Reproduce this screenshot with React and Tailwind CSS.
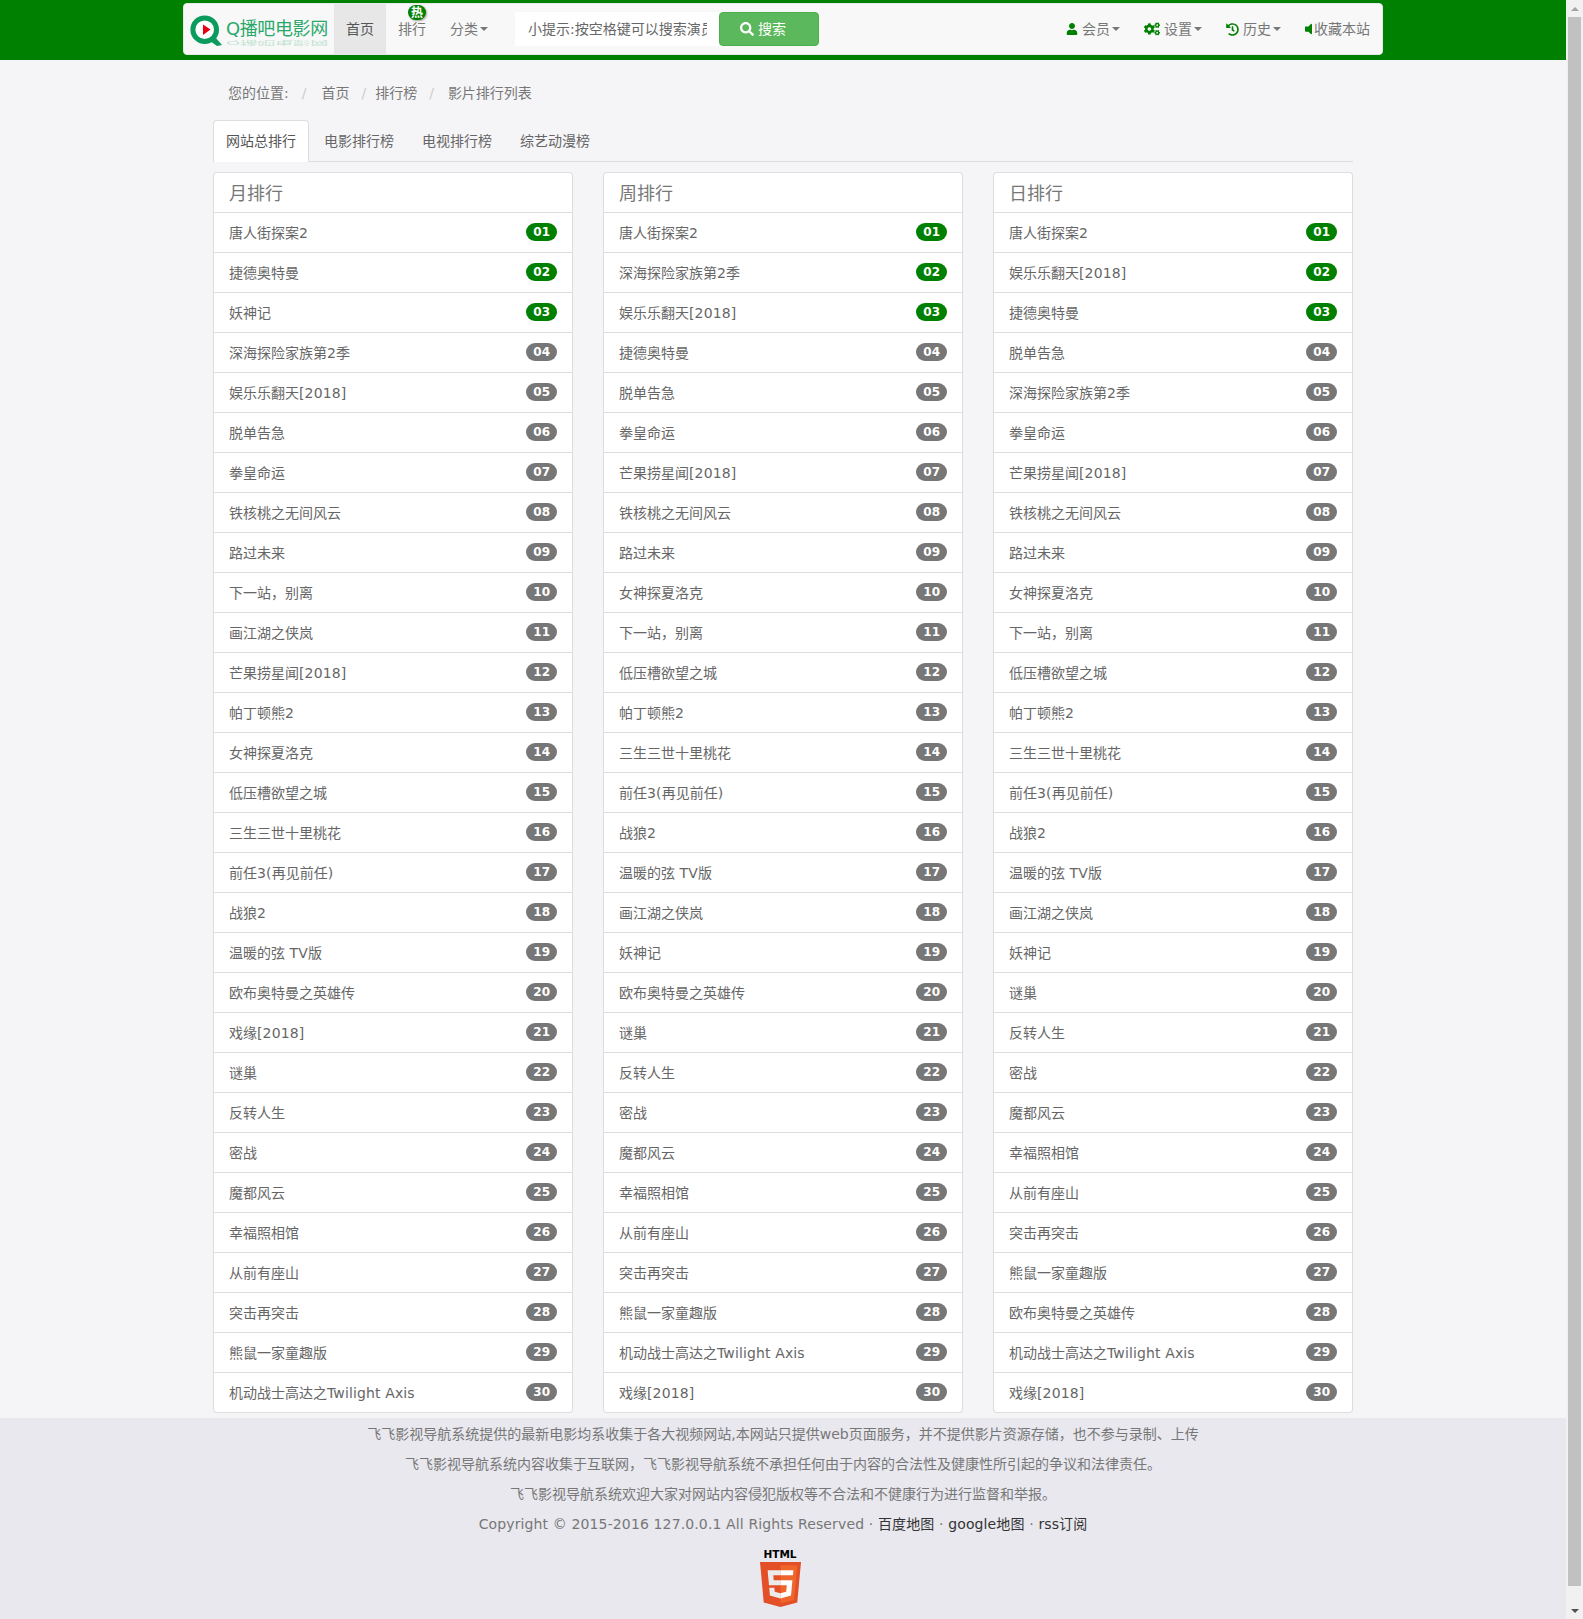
import React from "react";
import { FaUser, FaCogs, FaHistory, FaVolumeOff, FaSearch } from "react-icons/fa";

const month = ["唐人街探案2","捷德奥特曼","妖神记","深海探险家族第2季","娱乐乐翻天[2018]","脱单告急","拳皇命运","铁核桃之无间风云","路过未来","下一站，别离","画江湖之侠岚","芒果捞星闻[2018]","帕丁顿熊2","女神探夏洛克","低压槽欲望之城","三生三世十里桃花","前任3(再见前任)","战狼2","温暖的弦 TV版","欧布奥特曼之英雄传","戏缘[2018]","谜巢","反转人生","密战","魔都风云","幸福照相馆","从前有座山","突击再突击","熊鼠一家童趣版","机动战士高达之Twilight Axis"];
const week = ["唐人街探案2","深海探险家族第2季","娱乐乐翻天[2018]","捷德奥特曼","脱单告急","拳皇命运","芒果捞星闻[2018]","铁核桃之无间风云","路过未来","女神探夏洛克","下一站，别离","低压槽欲望之城","帕丁顿熊2","三生三世十里桃花","前任3(再见前任)","战狼2","温暖的弦 TV版","画江湖之侠岚","妖神记","欧布奥特曼之英雄传","谜巢","反转人生","密战","魔都风云","幸福照相馆","从前有座山","突击再突击","熊鼠一家童趣版","机动战士高达之Twilight Axis","戏缘[2018]"];
const day = ["唐人街探案2","娱乐乐翻天[2018]","捷德奥特曼","脱单告急","深海探险家族第2季","拳皇命运","芒果捞星闻[2018]","铁核桃之无间风云","路过未来","女神探夏洛克","下一站，别离","低压槽欲望之城","帕丁顿熊2","三生三世十里桃花","前任3(再见前任)","战狼2","温暖的弦 TV版","画江湖之侠岚","妖神记","谜巢","反转人生","密战","魔都风云","幸福照相馆","从前有座山","突击再突击","熊鼠一家童趣版","欧布奥特曼之英雄传","机动战士高达之Twilight Axis","戏缘[2018]"];

function Caret() {
  return <span className="ml-[2px] inline-block h-0 w-0 border-x-[4px] border-t-[4px] border-x-transparent border-t-[#777]" />;
}

function Logo() {
  return (
    <div className="flex h-[50px] w-[150px] shrink-0 items-start pl-[6px]">
      <svg width="33" height="32" viewBox="0 0 33 32" className="mt-[11px] shrink-0">
        <path d="M20 26 L27 31 L32 30 L25 22 Z" fill="#0b9c5d" />
        <circle cx="14.7" cy="14.7" r="11.8" fill="#fff" stroke="#0b9c5d" strokeWidth="5" />
        <path d="M13 9.5 L20.5 14.5 L13 20 Z" fill="#e60012" />
      </svg>
      <div className="ml-[3px] mt-[14px] text-[18px] leading-[22px] tracking-[-0.4px] whitespace-nowrap text-[#2aa86c]">
        Q播吧电影网
        <div aria-hidden="true" className="h-[6px] origin-top opacity-25 [transform:scaleY(-0.3)_translateY(-20px)]">Q播吧电影网</div>
      </div>
    </div>
  );
}

function NavRight({ icon, label, iconW, right = "pr-3", caret = true }) {
  return (
    <div className={`flex h-[50px] items-center pl-3 text-[#777] ${right}`}>
      <span className={`flex items-center text-[#008000] ${iconW}`}>{icon}</span>
      <span>{label}</span>
      {caret && <Caret />}
    </div>
  );
}

function Header() {
  return (
    <header className="h-[60px] bg-[#008000] pt-[3px]">
      <div className="mx-auto flex h-[52px] w-[1200px] items-stretch rounded border border-[#e7e7e7] bg-[#f8f8f8] text-[14px] leading-5">
        <Logo />
        <div className="flex h-[50px] w-[52px] items-center justify-center bg-[#e7e7e7] text-[#555]">首页</div>
        <div className="relative flex h-[50px] w-[52px] items-center justify-center text-[#777]">
          排行
          <span className="absolute left-[22px] top-[1px] flex h-[15px] w-[18px] items-center justify-center rounded-full bg-[#008000] text-[12px] font-bold leading-none text-white shadow-[1px_1px_2px_rgba(0,0,0,0.35)]">热</span>
        </div>
        <div className="flex h-[50px] items-center px-3 text-[#777]">分类<Caret /></div>
        <div className="ml-[15px] mt-[8px] flex h-[34px] w-[304px]">
          <input
            readOnly
            placeholder="小提示:按空格键可以搜索演员"
            className="w-[204px] bg-white pl-[13px] pr-[12px] text-[14px] outline-none placeholder:text-[#666]"
          />
          <div className="flex w-[100px] items-center rounded border border-[#4cae4c] bg-[#5cb85c] pl-[20px] text-white">
            <FaSearch size={14} />
            <span className="ml-[4px]">搜索</span>
          </div>
        </div>
        <div className="ml-auto flex">
          <NavRight icon={<FaUser size={12} />} label="会员" iconW="w-[16px]" />
          <NavRight icon={<FaCogs size={16} />} label="设置" iconW="w-[20px]" />
          <NavRight icon={<FaHistory size={13} />} label="历史" iconW="w-[17px]" right="pr-[10px]" />
          <NavRight icon={<FaVolumeOff size={14} />} label="收藏本站" iconW="w-[11px]" caret={false} />
        </div>
      </div>
    </header>
  );
}

function Breadcrumb() {
  const sep = "text-[#ccc]";
  return (
    <nav className="flex h-9 items-center pl-[15px] text-[14px] leading-5 text-[#777]">
      <span>您的位置:</span>
      <span className={`ml-[13px] ${sep}`}>/</span>
      <span className="ml-[15px]">首页</span>
      <span className={`ml-[12px] ${sep}`}>/</span>
      <span className="ml-[9px]">排行榜</span>
      <span className={`ml-[12px] ${sep}`}>/</span>
      <span className="ml-[14px]">影片排行列表</span>
    </nav>
  );
}

function Tabs() {
  const tabs = ["电影排行榜", "电视排行榜", "综艺动漫榜"];
  return (
    <div className="mt-[9px] flex h-[42px] gap-[2px] border-b border-[#ddd] text-[14px] leading-5 text-[#666]">
      <div className="h-[42px] rounded-t border border-b-0 border-[#ddd] bg-white px-3 pt-[10px] text-[#555]">网站总排行</div>
      {tabs.map((t) => (
        <div key={t} className="h-[41px] border border-transparent px-3 pt-[10px]">{t}</div>
      ))}
    </div>
  );
}

function Title({ name }) {
  return (
    <span className="text-[#666]">
      {name.split(/([\x21-\x7e ]{2,})/).map((part, i) =>
        i % 2 ? <span key={i} className="tracking-[0.13px]">{part}</span> : part
      )}
    </span>
  );
}

function Panel({ title, items }) {
  return (
    <section className="text-[#777]">
      <h3 className="h-[40px] rounded-t border-x border-t border-[#ddd] bg-white pl-[15px] pt-[9px] text-[18px] font-normal leading-[24px]">{title}</h3>
      <ul className="border-t border-[#ddd]">
        {items.map((name, i) => (
          <li key={i} className="flex h-[40px] items-center justify-between border-x border-b border-[#ddd] bg-white pl-[15px] pr-[15px] text-[14px] leading-5 last:rounded-b">
            <Title name={name} />
            <span className={`-mt-px rounded-[10px] px-[7px] py-[3px] text-[12px] font-bold leading-3 text-white ${i < 3 ? "bg-[#008000]" : "bg-[#777]"}`}>
              {String(i + 1).padStart(2, "0")}
            </span>
          </li>
        ))}
      </ul>
    </section>
  );
}

function Html5() {
  return (
    <div className="ml-[750px] mt-[10px] flex w-[60px] flex-col items-center">
      <div className="text-[10.5px] font-bold leading-[11px] text-black">HTML</div>
      <svg width="41" height="45" viewBox="30 0 451 512" preserveAspectRatio="none" className="mt-[2px]" aria-hidden="true">
        <path fill="#E34F26" d="M71,460 L30,0 481,0 440,460 255,512" />
        <path fill="#EF652A" d="M256,472 L405,431 440,37 256,37" />
        <path fill="#EBEBEB" d="M256,208 L181,208 176,150 256,150 256,94 255,94 114,94 115,109 129,265 256,265zM256,355 L255,355 192,338 188,293 158,293 132,293 139,382 255,414 256,414z" />
        <path fill="#FFF" d="M255,208 L255,265 325,265 318,338 255,355 255,414 371,382 372,372 385,223 387,208 371,208zM255,94 L255,150 392,150 393,138 396,109 397,94z" />
      </svg>
    </div>
  );
}

function Footer() {
  return (
    <footer className="min-h-0 flex-1 bg-[#e8e8ee] pt-px text-center text-[14px] text-[#777]">
      <p className="leading-[30px]">飞飞影视导航系统提供的最新电影均系收集于各大视频网站,本网站只提供web页面服务，并不提供影片资源存储，也不参与录制、上传</p>
      <p className="leading-[30px]">飞飞影视导航系统内容收集于互联网，飞飞影视导航系统不承担任何由于内容的合法性及健康性所引起的争议和法律责任。</p>
      <p className="leading-[30px]">飞飞影视导航系统欢迎大家对网站内容侵犯版权等不合法和不健康行为进行监督和举报。</p>
      <p className="leading-[30px] tracking-[0.13px]">
        Copyright © 2015-2016 127.0.0.1 All Rights Reserved · <span className="text-[#333]">百度地图</span> · <span className="text-[#333]">google地图</span> · <span className="text-[#333]">rss订阅</span>
      </p>
      <Html5 />
    </footer>
  );
}

function Scrollbar() {
  return (
    <div className="flex w-[17px] shrink-0 flex-col bg-[#f1f1f1]">
      <div className="flex h-[17px] items-center justify-center">
        <span className="h-0 w-0 border-x-[4px] border-b-[4px] border-x-transparent border-b-[#a3a3a3]" />
      </div>
      <div className="mx-[2px] flex-1 bg-[#c1c1c1]" />
      <div className="mt-[16px] flex h-[17px] items-center justify-center">
        <span className="h-0 w-0 border-x-[4px] border-t-[4px] border-x-transparent border-t-[#505050]" />
      </div>
    </div>
  );
}

export default function App() {
  return (
    <div className="flex h-[1619px] w-[1583px] overflow-hidden bg-[#f5f5f7] font-['DejaVu_Sans','Noto_Sans_CJK_SC',sans-serif]">
      <div className="flex w-[1566px] flex-col">
        <Header />
        <main className="mx-auto mb-[5px] w-[1140px] pt-[15px]">
          <Breadcrumb />
          <Tabs />
          <div className="mt-[10px] grid grid-cols-3 gap-[30px]">
            <Panel title="月排行" items={month} />
            <Panel title="周排行" items={week} />
            <Panel title="日排行" items={day} />
          </div>
        </main>
        <Footer />
      </div>
      <Scrollbar />
    </div>
  );
}
